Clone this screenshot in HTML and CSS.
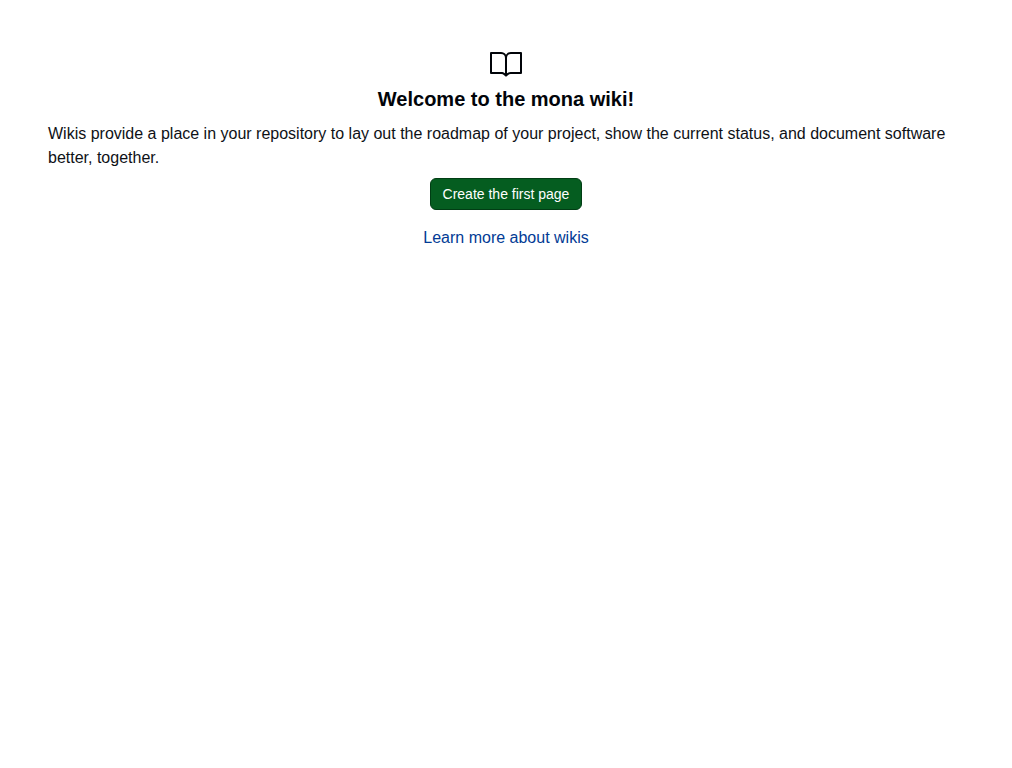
FILE: index.html
```html
<!DOCTYPE html>
<html lang="en">
<head>
<meta charset="utf-8">
<title>Wiki</title>
<link rel="stylesheet" href="styles.css">
</head>
<body>
<main class="blankslate">
  <svg class="blankslate-icon" viewBox="0 0 24 24" width="32" height="32" aria-hidden="true"><path d="M0 3.75A.75.75 0 0 1 .75 3h7.497c1.566 0 2.945.8 3.751 2.014A4.495 4.495 0 0 1 15.75 3h7.5a.75.75 0 0 1 .75.75v15.063a.752.752 0 0 1-.755.75l-7.682-.052a3 3 0 0 0-2.142.878l-.89.891a.75.75 0 0 1-1.061 0l-.902-.901a2.996 2.996 0 0 0-2.121-.879H.75a.75.75 0 0 1-.75-.75Zm12.75 15.232a4.503 4.503 0 0 1 2.823-.971l6.927.047V4.5h-6.75a3 3 0 0 0-3 3ZM11.247 7.497a3 3 0 0 0-3-2.997H1.5V18h6.947c1.018 0 2.006.346 2.803.98Z"/></svg>
  <h2 class="blankslate-heading">Welcome to the mona wiki!</h2>
  <p class="blankslate-text">Wikis provide a place in your repository to lay out the roadmap of your project, show the current status, and document software better, together.</p>
  <button class="button-primary" type="button">Create the first page</button>
  <a class="blankslate-link" href="#">Learn more about wikis</a>
</main>
</body>
</html>
```
FILE: styles.css
```css
body {
  margin: 0;
  background: #fff;
  font-family: "Liberation Sans", Arial, sans-serif;
  -webkit-font-smoothing: antialiased;
}

.blankslate {
  display: flex;
  flex-direction: column;
  align-items: center;
  padding: 48px;
  color: #010409;
  font-size: 16px;
  line-height: 24px;
}

.blankslate-icon {
  display: block;
  margin-bottom: 4px;
  fill: currentColor;
}

.blankslate-heading {
  margin: 0 0 8px;
  font-size: 20px;
  line-height: 30px;
  font-weight: 600;
}

.blankslate-text {
  margin: 0 0 8px;
  color: #0e1116;
}

.button-primary {
  box-sizing: border-box;
  height: 32px;
  padding: 0 12px;
  border: 1px solid #013d14;
  border-radius: 6px;
  background: #055d20;
  color: #fff;
  font: 500 14px/20px "Liberation Sans", Arial, sans-serif;
}

.blankslate-link {
  margin-top: 16px;
  color: #023b95;
  text-decoration: none;
}
```
